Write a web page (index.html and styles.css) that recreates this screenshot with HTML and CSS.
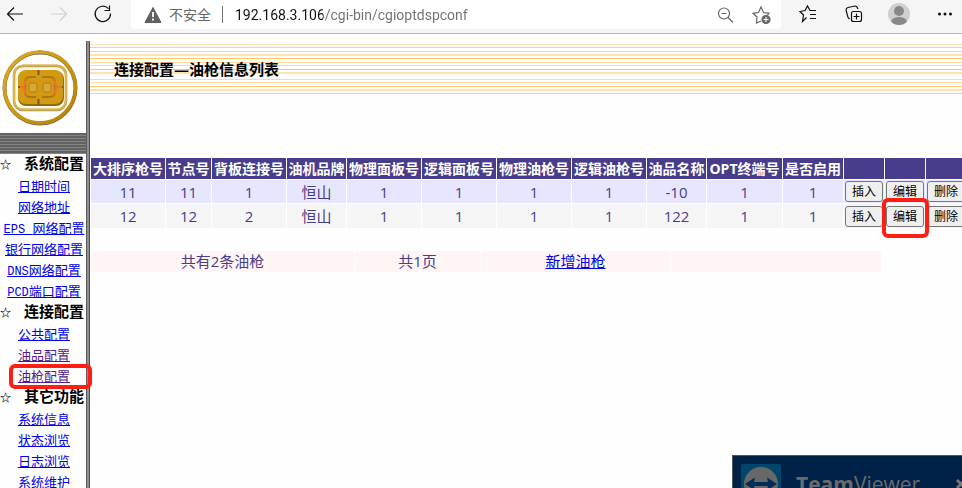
FILE: index.html
```html
<!DOCTYPE html>
<html lang="zh-CN">
<head>
<meta charset="utf-8">
<title>连接配置</title>
<link rel="stylesheet" href="styles.css">
</head>
<body>
<header class="toolbar">
  <nav class="nav">
    <button class="icon-btn" aria-label="后退"><svg width="20" height="20" viewBox="0 0 20 20"><path d="M18 10H2.5M9 3.5L2.500 10L9 16.500"/></svg></button>
    <button class="icon-btn disabled" aria-label="前进"><svg width="20" height="20" viewBox="0 0 20 20"><path d="M2 10h15.500M11 3.500L17.500 10L11 16.500"/></svg></button>
    <button class="icon-btn" aria-label="刷新"><svg width="20" height="20" viewBox="0 0 20 20"><path d="M17.500 9.500A7.700 7.700 0 1 1 15.500 4.700M11.500 6.500H16.500V1.500"/></svg></button>
  </nav>
  <div class="address">
    <svg class="warn" width="18" height="18" viewBox="0 0 18 18"><path d="M9 1.500L17 16.500H1Z" fill="#606060" stroke="#606060" stroke-linejoin="round"/><path d="M9 6v5M9 12.500v2" stroke="#fff" stroke-width="1.800"/></svg>
    <label class="insecure" for="url">不安全</label>
    <input class="url" id="url" type="text" value="192.168.3.106/cgi-bin/cgioptdspconf">
    <button class="icon-btn grey" aria-label="缩小"><svg width="20" height="20" viewBox="0 0 20 20"><circle cx="8" cy="8.500" r="5.500"/><path d="M5.500 8.500h5M12 12.500L17 17.500"/></svg></button>
    <button class="icon-btn grey" aria-label="收藏"><svg width="20" height="20" viewBox="0 0 20 20"><path d="M9 16L4.500 18L5 12L1 8.300L6.500 7.500L9 2L11.500 7.500L17 8.300L15.500 10"/><circle cx="14" cy="14.500" r="4" fill="#666"/><path d="M14 12v5M11.500 14.500h5" stroke="#fff"/></svg></button>
  </div>
  <div class="tools">
    <button class="icon-btn wide" aria-label="收藏夹"><svg width="24" height="24" viewBox="0 0 24 24"><path d="M11.500 15.500L7.500 19.500L8.500 13L5 9.500L10 8.500L12.500 4L15 8.500H21M15 12.500h6M15 16.500h6"/></svg></button>
    <button class="icon-btn wide" aria-label="集锦"><svg width="24" height="24" viewBox="0 0 24 24"><rect x="10.500" y="9.500" width="10" height="10" rx="2"/><path d="M15.500 11.500v6M12.500 14.500h6M8.500 17L7 15.500L5 8Q5 6 7 5.500L14 4Q16 4 17 7"/></svg></button>
    <button class="icon-btn wide" aria-label="用户"><svg width="24" height="24" viewBox="0 0 24 24"><defs><clipPath id="face"><circle cx="12" cy="12" r="11"/></clipPath></defs><g clip-path="url(#face)" stroke="none"><rect width="24" height="24" fill="#d2d0ce"/><circle cx="12" cy="9" r="5" fill="#8a8886"/><ellipse cx="12" cy="20" rx="8" ry="5" fill="#8a8886"/></g></svg></button>
    <button class="icon-btn wide" aria-label="更多"><svg width="24" height="24" viewBox="0 0 24 24"><g fill="#111" stroke="none"><circle cx="6.500" cy="12" r="1.500"/><circle cx="12" cy="12" r="1.500"/><circle cx="17.500" cy="12" r="1.500"/></g></svg></button>
  </div>
</header>

<div class="page">
  <aside class="sidebar">
    <svg class="logo" width="80" height="92" viewBox="0 0 80 92">
      <defs><linearGradient id="gold" x1="0" y1="0" x2="1" y2="1"><stop offset="0" stop-color="#d9a92c"/><stop offset=".5" stop-color="#cf980e"/><stop offset="1" stop-color="#b57e08"/></linearGradient></defs>
      <circle cx="40" cy="47" r="35.500" fill="none" stroke="#77704f" stroke-width="4"/>
      <circle cx="40" cy="46.500" r="35.500" fill="none" stroke="url(#gold)" stroke-width="3.500"/>
      <rect x="14" y="25" width="52" height="44" rx="9" fill="#fffbe9" stroke="#9f946c" stroke-width="2.500"/>
      <rect x="14" y="24.500" width="52" height="44" rx="9" fill="none" stroke="#e4b23b" stroke-width="2"/>
      <rect x="18" y="30" width="46" height="35" rx="8" fill="#946b12"/>
      <rect x="18" y="29" width="45" height="34" rx="8" fill="#d29a12"/>
      <path d="M38.500 29v5M38.500 58v6M18 46h6M57 46h6" stroke="#795b14" stroke-width="2"/>
      <path d="M36 36h-6q-5 0-5 6v8q0 6 5 6h6M42 36h8q5 0 5 6v8q0 6-5 6h-8" fill="none" stroke="#ad7612" stroke-width="2"/>
      <path d="M28 38q-4 2-4 8t4 8M52 38q4 2 4 8t-4 8M20 46h4M56 46h6" fill="none" stroke="#e8762b" stroke-width="2"/>
      <rect x="29" y="42" width="8" height="9" rx="2" fill="#d9a737" stroke="#b77a12"/>
      <rect x="43" y="42" width="8" height="9" rx="2" fill="#d9a737" stroke="#b77a12"/>
    </svg>
    <div class="strip"></div>
    <nav class="menu">
      <h2><span class="star">☆</span><span>系统配置</span></h2>
      <a href="#">日期时间</a>
      <a href="#">网络地址</a>
      <a href="#"><span class="latin">EPS </span>网络配置</a>
      <a href="#">银行网络配置</a>
      <a href="#"><span class="latin">DNS</span>网络配置</a>
      <a href="#"><span class="latin">PCD</span>端口配置</a>
      <h2><span class="star">☆</span><span>连接配置</span></h2>
      <a href="#">公共配置</a>
      <a href="#" class="visited">油品配置</a>
      <div class="marked"><a href="#" class="visited">油枪配置</a><i class="mark mark-menu"></i></div>
      <h2><span class="star">☆</span><span>其它功能</span></h2>
      <a href="#">系统信息</a>
      <a href="#">状态浏览</a>
      <a href="#">日志浏览</a>
      <a href="#">系统维护</a>
    </nav>
  </aside>
  <div class="divider"></div>
  <main class="content">
    <h1>连接配置—油枪信息列表</h1>
    <table class="guns">
      <colgroup><col class="c5"><col class="c3"><col class="c5"><col class="c4"><col class="c5"><col class="c5"><col class="c5"><col class="c5"><col class="c4"><col class="opt"><col class="used"><col class="act"><col class="act"><col class="act"></colgroup>
      <thead><tr><th>大排序枪号</th><th>节点号</th><th>背板连接号</th><th>油机品牌</th><th>物理面板号</th><th>逻辑面板号</th><th>物理油枪号</th><th>逻辑油枪号</th><th>油品名称</th><th>OPT终端号</th><th>是否启用</th><th></th><th></th><th></th></tr></thead>
      <tbody>
        <tr><td>11</td><td>11</td><td>1</td><td>恒山</td><td>1</td><td>1</td><td>1</td><td>1</td><td>-10</td><td>1</td><td>1</td><td class="cmd"><button>插入</button></td><td class="cmd"><button>编辑</button></td><td class="cmd"><button>删除</button></td></tr>
        <tr><td>12</td><td>12</td><td>2</td><td>恒山</td><td>1</td><td>1</td><td>1</td><td>1</td><td>122</td><td>1</td><td>1</td><td class="cmd"><button>插入</button></td><td class="cmd"><button>编辑</button><i class="mark mark-edit"></i></td><td class="cmd"><button>删除</button></td></tr>
      </tbody>
    </table>
    <table class="summary">
      <colgroup><col class="total"><col class="pages"><col class="add"><col class="rest"></colgroup>
      <tbody><tr><td>共有2条油枪</td><td>共1页</td><td><a href="#">新增油枪</a></td><td></td></tr></tbody>
    </table>
  </main>
</div>

<aside class="popup">
  <svg width="40" height="40" viewBox="0 0 40 40"><rect width="40" height="40" rx="2" fill="#00476b"/><circle cx="20" cy="20" r="17" fill="#686868"/><path d="M4 20L14 13.500L13 18H27L26 13.500L36 20L26 26.500L27 22H13L14 26.500Z" fill="#002c57"/></svg>
  <span class="brand"><b>Team</b>Viewer</span>
  <button class="close" aria-label="关闭"><svg width="12" height="12" viewBox="0 0 12 12"><path d="M2 2l8 8M10 2l-8 8" stroke="#777" stroke-width="3"/></svg></button>
</aside>
</body>
</html>
```
FILE: styles.css
```css
* { box-sizing: border-box; }

body {
  margin: 0;
  height: 100vh;
  overflow: hidden;
  display: flex;
  flex-direction: column;
  background: #fefefe;
  color: #483d8b;
  font-family: "Open Sans", "Noto Sans CJK SC", sans-serif;
  font-size: 15px;
}

button { font: inherit; padding: 0; }

/* Browser toolbar */
.toolbar {
  flex: none;
  height: 34px;
  display: flex;
  align-items: flex-start;
  background: #f5f5f5;
  border-bottom: 1px solid #b8b8b8;
}
.nav { display: flex; gap: 24px; padding: 4px 18px 0 5px; }
.icon-btn {
  flex: none;
  width: 20px;
  height: 20px;
  border: 0;
  background: none;
  color: #111;
}
.icon-btn.wide { width: 24px; height: 24px; }
.icon-btn.disabled { color: #d0d0d0; }
.icon-btn.grey { color: #666; }
.icon-btn svg { display: block; fill: none; stroke: currentColor; stroke-width: 1.2; }
.address {
  flex: 1;
  height: 29px;
  display: flex;
  align-items: center;
  gap: 16px;
  padding-left: 13px;
  padding-right: 9px;
  background: #fff;
  border-radius: 0 0 4px 4px;
}
.warn { flex: none; margin-right: -9px; }
.insecure {
  padding-right: 11px;
  border-right: 1px solid #767676;
  margin-right: -4px;
  color: #666;
  font-size: 14px;
  line-height: 17px;
}
.url {
  flex: 1;
  min-width: 0;
  height: 24px;
  border: 0;
  padding: 0;
  outline: 0;
  font-family: Roboto, sans-serif;
  font-size: 14px;
  color: transparent;
  background: linear-gradient(to right, #111 88px, #707070 88px);
  background-clip: text;
  -webkit-background-clip: text;
}
.tools { display: flex; gap: 22px; padding: 2px 5px 0 14px; }

/* Page frame */
.page { flex: 1; min-height: 0; display: flex; padding-top: 7px; }
.sidebar { flex: none; width: 86px; }
.logo { display: block; }
.strip {
  height: 21px;
  background: repeating-linear-gradient(#626262 0 2px, #858585 2px 3px);
}
.divider {
  flex: none;
  width: 4px;
  background: linear-gradient(to right, #5c5c5c 1px, #8f8f8f 1px 3px, #4c4c4c 3px);
}

/* Side menu */
.menu {
  padding-top: 1px;
  font-family: "Liberation Mono", "Noto Sans CJK SC", sans-serif;
  font-size: 13px;
  text-align: center;
}
.menu h2 {
  margin: 0;
  height: 22px;
  display: flex;
  justify-content: space-between;
  padding-right: 2px;
  color: #000;
  font-size: 15px;
  line-height: 22px;
}
.menu .star { font-size: 11px; }
.menu a {
  display: block;
  height: 21px;
  line-height: 21px;
  margin-left: 2px;
  color: #00e;
  white-space: pre;
}
.menu a.visited { color: #551a8b; }
.latin { font-size: 12px; }
.marked { position: relative; }

.mark {
  position: absolute;
  border: 4px solid #ff1e12;
  border-radius: 6px;
  pointer-events: none;
  z-index: 1;
}
.mark-menu { inset: -3px -6px -1px 9px; }
.mark-edit { inset: -6px -4px -10px -3px; }

/* Content */
.content { flex: 1; min-width: 0; overflow: hidden; }
h1 {
  margin: 2px 0 62px;
  height: 52px;
  padding-left: 24px;
  color: #000;
  font-size: 15px;
  line-height: 52px;
  background: linear-gradient(
    #fff 1px, #ffdfb4 1px 2px, #fff 2px 4px, #ffd184 4px 5px, #fff 5px 8px,
    #ffd390 8px 9px, #fff 9px 11px, #ffe2b0 11px 13px, #fff 13px 15px,
    #ffc767 15px 16px, #fff 16px 19px, #ffdf9c 19px 20px, #fff 20px 22px,
    #ffd691 22px 23px, #fff 23px 26px, #ffc76c 26px 27px, #fff 27px 29px,
    #ffe2b0 29px 31px, #fff 31px 36px, #ffd8a4 36px 37px, #fff 37px 39px,
    #ffdfa6 39px 40px, #fff 40px 43px, #ffc767 43px 44px, #fff 44px 46px,
    #ffe2b0 46px 48px, #fff 48px 50px, #ffcf7c 50px 51px, #fff 51px);
}

table { table-layout: fixed; border-spacing: 1px; }
th, td { padding: 0; text-align: center; white-space: nowrap; }
.guns { width: max-content; }
.guns th {
  height: 21px;
  background: #483d8b;
  color: #fff;
  font-size: 14px;
  line-height: 20px;
}
.guns td { height: 23px; line-height: 20px; background: #e6e6ff; }
.guns tr:nth-child(2) td { height: 24px; background: #f5f5f5; }
.guns td.cmd { position: relative; padding: 0 1px; }
.cmd button {
  display: block;
  width: 100%;
  height: 21px;
  border: 1px solid #767676;
  border-radius: 3px;
  background: #efefef;
  color: #000;
  font-size: 12px;
  line-height: 19px;
}
.c5 { width: 74px; }
.c4 { width: 59px; }
.c3 { width: 45px; }
.opt { width: 75px; }
.used { width: 60px; }
.act { width: 40px; }

.summary { width: 792px; margin-top: 21px; }
.summary td { height: 21px; line-height: 21px; background: #fff5f5; }
.summary a { color: #00e; }
.total { width: 263px; }
.pages { width: 125px; }
.add { width: 189px; }

/* Corner notification */
.popup {
  position: fixed;
  right: 0;
  bottom: 0;
  width: 230px;
  height: 33px;
  overflow: hidden;
  display: flex;
  align-items: flex-start;
  padding: 8px 0 0 8px;
  border: solid #555;
  border-width: 1px 0 0 1px;
  background: #002248;
  color: #6b6b6b;
}
.popup svg { flex: none; }
.brand { margin-left: 15px; font-size: 21px; line-height: 40px; }
.close { margin: 14px -5px 0 auto; border: 0; background: none; line-height: 0; }
```
